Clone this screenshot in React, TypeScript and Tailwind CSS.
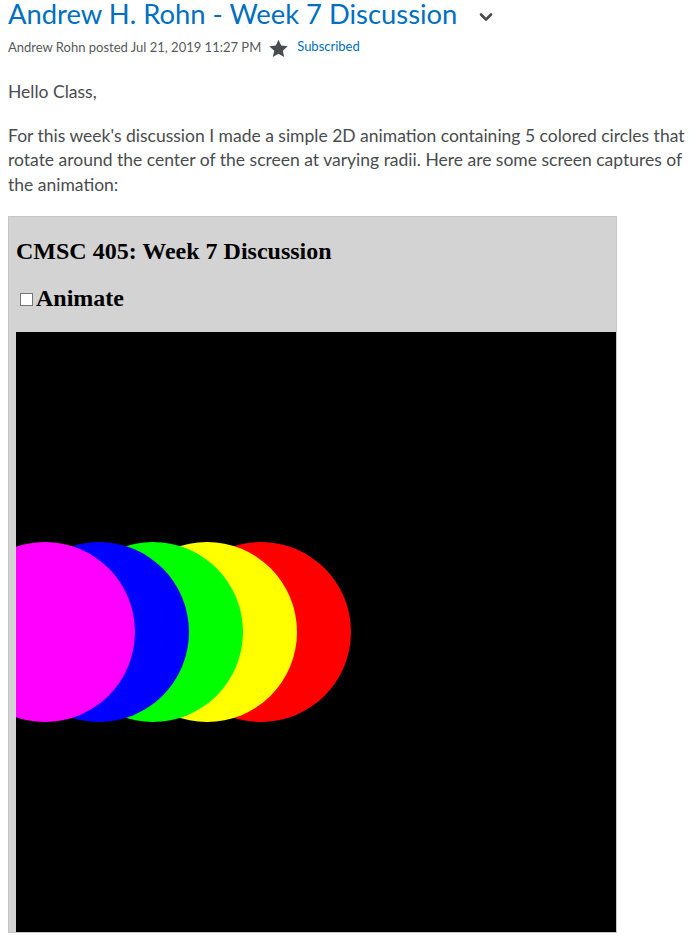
import React from "react";

const lato = { fontFamily: "Lato, 'Open Sans', sans-serif" };

const StarIcon: React.FC = () => (
  <svg width="19" height="19" viewBox="0 0 24 24" className="shrink-0">
    <path
      d="M12 0.8l3.4 7.5 8.2.9-6.2 5.5 1.8 8.1L12 18.6l-7.2 4.2 1.8-8.1L.4 9.2l8.2-.9z"
      fill="#494c4e"
    />
  </svg>
);

const ChevronIcon: React.FC = () => (
  <svg width="14" height="10" viewBox="0 0 14 10" className="shrink-0">
    <path
      d="M2 2.5l5 5 5-5"
      fill="none"
      stroke="#494c4e"
      strokeWidth="2.6"
      strokeLinecap="round"
      strokeLinejoin="round"
    />
  </svg>
);

const circles = [
  { cx: 245, fill: "#ff0000" },
  { cx: 191, fill: "#ffff00" },
  { cx: 137, fill: "#00ff00" },
  { cx: 83, fill: "#0000ff" },
  { cx: 29, fill: "#ff00ff" },
];

const Canvas: React.FC = () => (
  <svg width="600" height="600" viewBox="0 0 600 600" className="block">
    <rect width="600" height="600" fill="#000" />
    {circles.map((c) => (
      <circle key={c.fill} cx={c.cx} cy={300} r={90} fill={c.fill} />
    ))}
  </svg>
);

export default function App() {
  return (
    <div className="min-h-[940px] bg-white px-2 pt-px" style={lato}>
      <div className="-mt-[4px] flex h-[33px] items-center">
        <h1 className="text-[27.4px] leading-[33px] text-[#006fbf]">
          Andrew H. Rohn - Week 7 Discussion
        </h1>
        <span className="ml-[22px] mt-[6px]">
          <ChevronIcon />
        </span>
      </div>

      <div className="mt-[8px] flex h-[18px] items-center text-[13px] leading-[16px]">
        <span className="text-[#565a5c]">
          Andrew Rohn posted Jul 21, 2019 11:27 PM
        </span>
        <span className="ml-[8px] mt-[2px]">
          <StarIcon />
        </span>
        <span className="ml-[9px] -mt-[3px] text-[#006fbf]">Subscribed</span>
      </div>

      <div className="mt-[24px] text-[17.5px] leading-[24.5px] text-[#494c4e]">
        <p>Hello Class,</p>
        <p className="mt-[19px]">
          For this week's discussion I made a simple 2D animation containing 5
          colored circles that rotate around the center of the screen at
          varying radii. Here are some screen captures of the animation:
        </p>
      </div>

      <div
        className="mt-[19px] w-[609px] border border-[#c6c6c6] bg-[#d3d3d3] pl-[7px] pt-[20px] text-black"
        style={{ fontFamily: "'Liberation Serif', 'Times New Roman', serif" }}
      >
        <h2 className="text-[24px] font-bold leading-[28px]">
          CMSC 405: Week 7 Discussion
        </h2>
        <div className="mt-[19px] flex items-end text-[24px] font-bold leading-[28px]">
          <span className="mb-[6px] ml-[4px] mr-[3px] inline-block h-[13px] w-[13px] border border-[#767676] bg-white" />
          <span>Animate</span>
        </div>
        <div className="mt-[20px]">
          <Canvas />
        </div>
      </div>
    </div>
  );
}
